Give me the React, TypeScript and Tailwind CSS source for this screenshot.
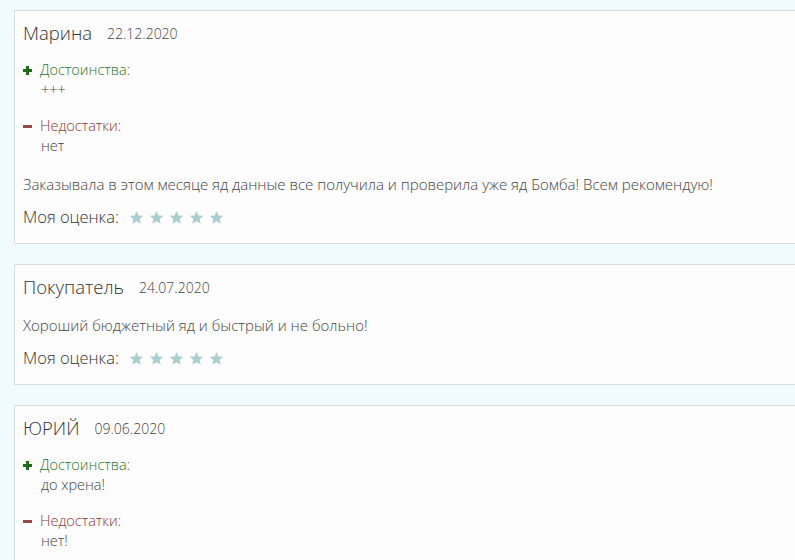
const REVIEWS = [
  {
    name: "Марина",
    date: "22.12.2020",
    pros: "+++",
    cons: "нет",
    text: "Заказывала в этом месяце яд данные все получила и проверила уже яд Бомба! Всем рекомендую!",
    rating: true,
  },
  {
    name: "Покупатель",
    date: "24.07.2020",
    text: "Хороший бюджетный яд и быстрый и не больно!",
    rating: true,
  },
  {
    name: "ЮРИЙ",
    date: "09.06.2020",
    pros: "до хрена!",
    cons: "нет!",
    text: "",
    rating: true,
  },
];

function Star() {
  return (
    <svg viewBox="0 0 24 24" className="h-[15px] w-[15px]" fill="#abcfd0">
      <path d="M12 1.5l3.1 7.1 7.7.7-5.8 5.1 1.7 7.6L12 18l-6.7 4 1.7-7.6-5.8-5.1 7.7-.7z" />
    </svg>
  );
}

type Review = (typeof REVIEWS)[number];

function ReviewCard({ r }: { r: Review }) {
  return (
    <div className="ml-[14px] mr-[-20px] border border-[#dcdcdc] bg-[#fdfdfd] px-[8px] pt-[10px] pb-[14px] font-light">
      <div className="flex h-6 items-center">
        <span className="text-[18.5px] text-[#333]">{r.name}</span>
        <span className="ml-[15px] text-[14px] text-[#444]">{r.date}</span>
      </div>

      {r.pros && (
        <div className="pb-[2px] text-[14.5px] leading-5">
          <div className="mt-[15px]">
            <div className="flex items-center text-[#2f7126]">
              <span className="mr-[8px] flex h-5 w-[9px] items-center justify-center">
                <svg viewBox="0 0 9 9" className="h-[9px] w-[9px]">
                  <rect x="3" y="0" width="3" height="9" fill="#1f6b17" />
                  <rect x="0" y="3" width="9" height="3" fill="#1f6b17" />
                </svg>
              </span>
              Достоинства:
            </div>
            <div className="pl-[18px] text-[#444]">{r.pros}</div>
          </div>
          <div className="mt-4">
            <div className="flex items-center text-[#873a36]">
              <span className="mr-[8px] flex h-5 w-[9px] items-center justify-center">
                <svg viewBox="0 0 9 3" className="h-[3px] w-[9px]">
                  <rect x="0" y="0" width="9" height="3" fill="#9a4a45" />
                </svg>
              </span>
              Недостатки:
            </div>
            <div className="pl-[18px] text-[#444]">{r.cons}</div>
          </div>
        </div>
      )}

      {r.text && (
        <p className="mt-4 text-[15px] leading-5 text-[#444]">{r.text}</p>
      )}

      {r.text && r.rating && (
        <div className="mt-[11px] flex h-6 items-center">
          <span className="text-[16.5px] text-[#333]">Моя оценка:</span>
          <span className="ml-[10px] flex gap-[5px]">
            <Star />
            <Star />
            <Star />
            <Star />
            <Star />
          </span>
        </div>
      )}
    </div>
  );
}

export default function App() {
  return (
    <div
      className="flex h-[560px] w-[795px] flex-col gap-5 overflow-hidden bg-[#effbfc] pt-[10px]"
      style={{ fontFamily: '"Open Sans", sans-serif' }}
    >
      {REVIEWS.map((r) => (
        <ReviewCard key={r.name} r={r} />
      ))}
    </div>
  );
}
